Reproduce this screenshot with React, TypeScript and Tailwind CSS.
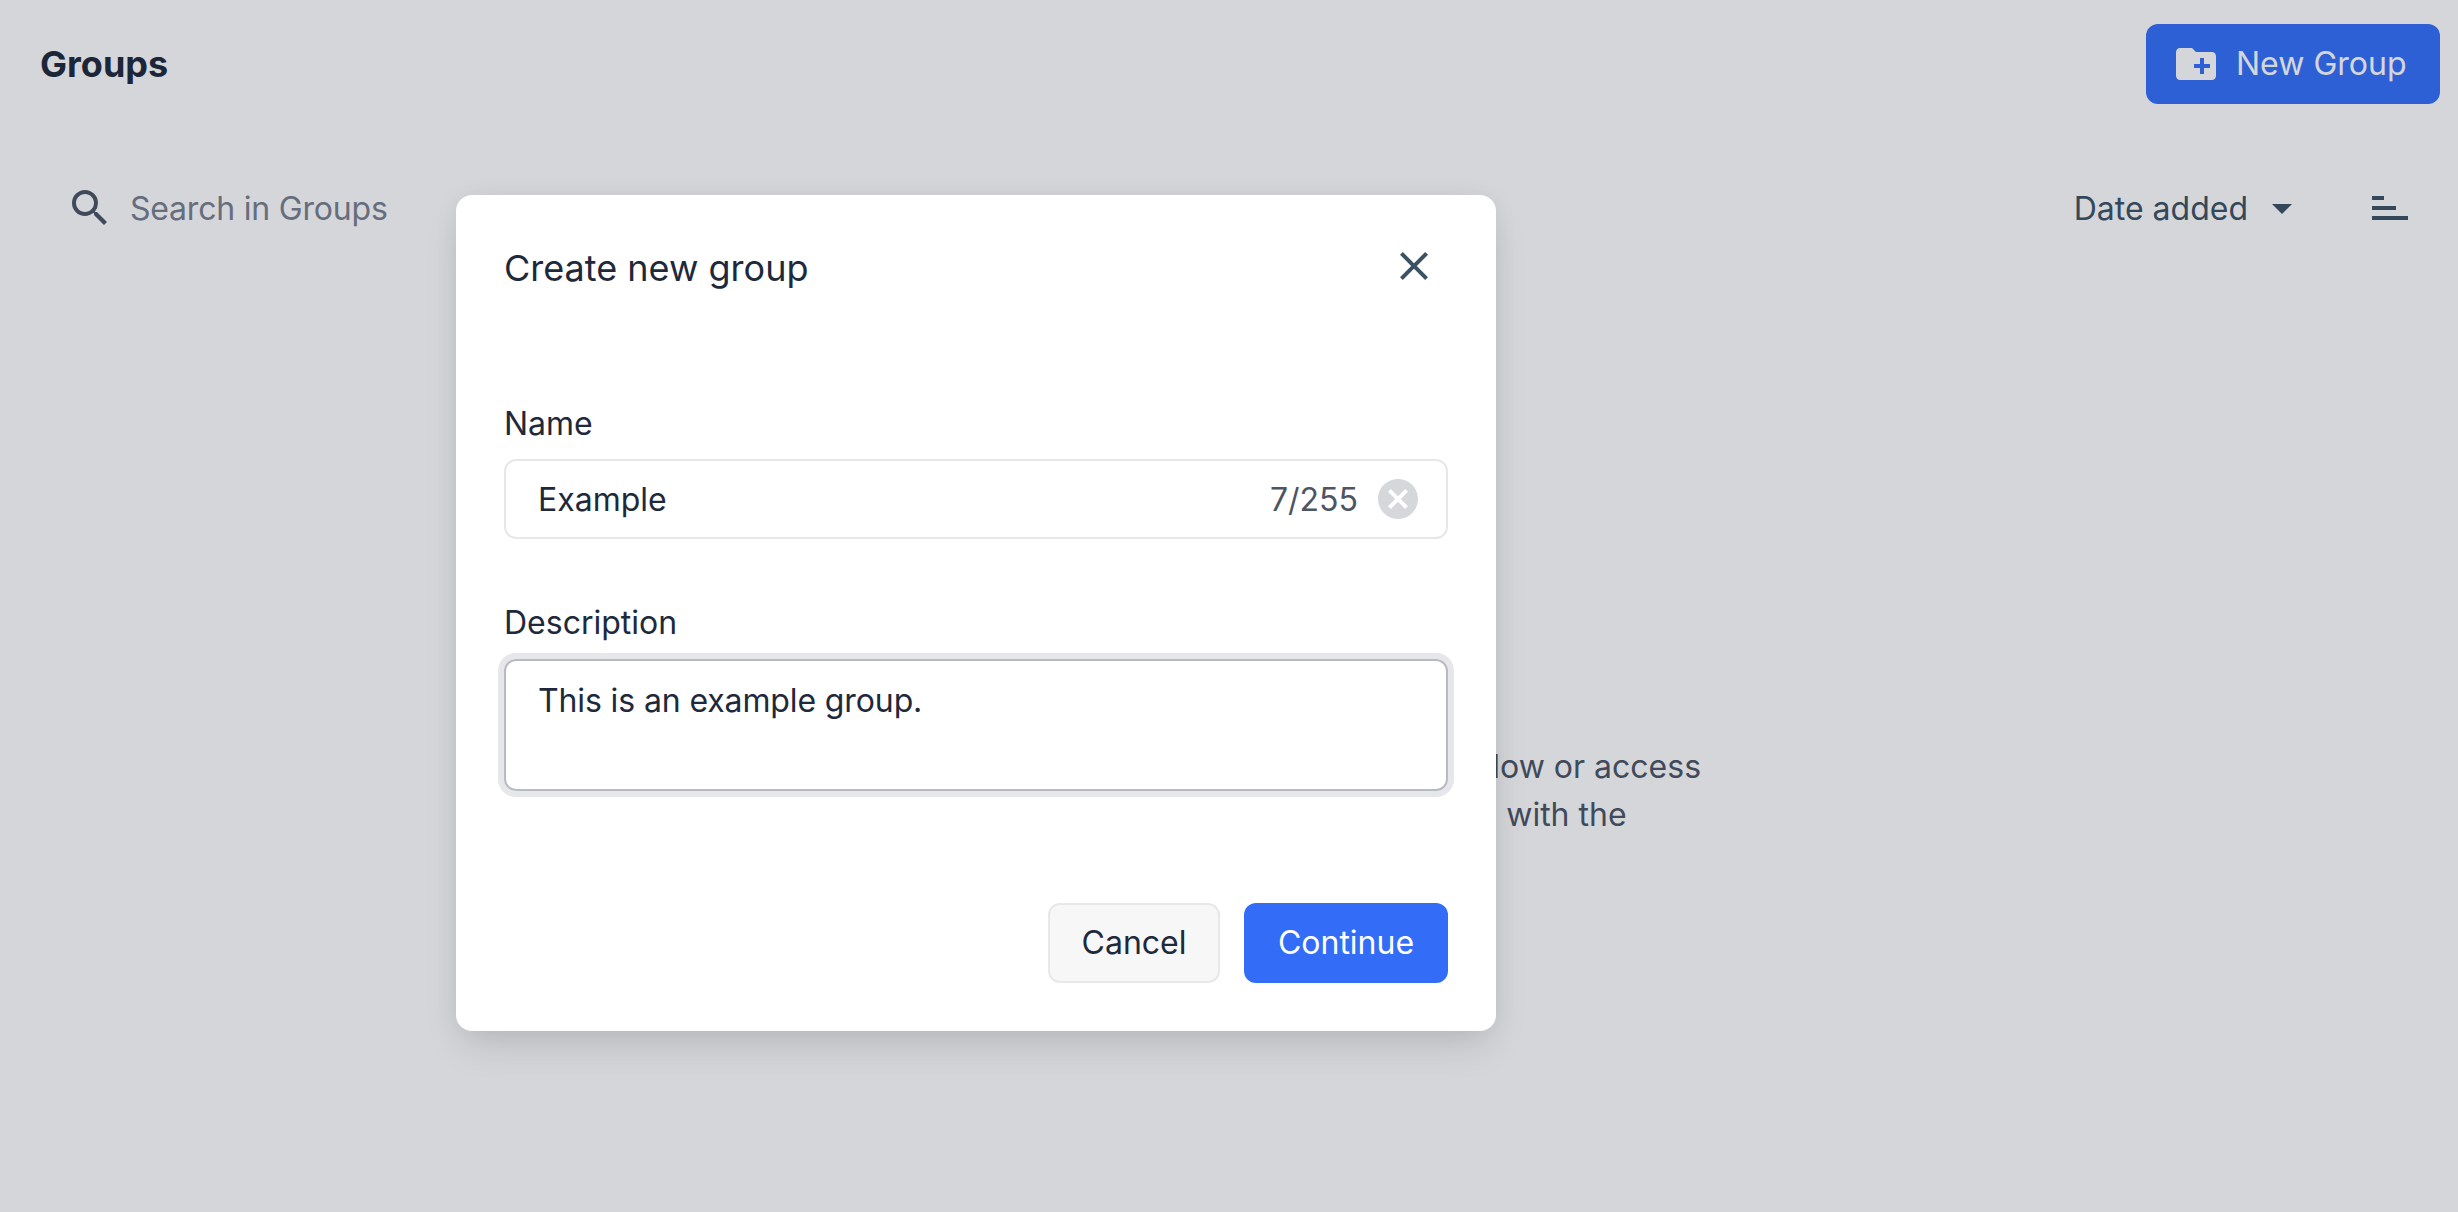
const inter = { fontFamily: 'Inter, sans-serif' }

function SearchIcon() {
  return (
    <svg viewBox="0 0 24 24" className="w-12 h-12 shrink-0 fill-[#4b5563]">
      <path d="M15.5 14h-.79l-.28-.27A6.471 6.471 0 0 0 16 9.5 6.5 6.5 0 1 0 9.5 16c1.61 0 3.09-.59 4.23-1.57l.27.28v.79l5 4.99L20.49 19l-4.99-5zm-6 0C7.01 14 5 11.99 5 9.5S7.01 5 9.5 5 14 7.01 14 9.5 11.99 14 9.5 14z" />
    </svg>
  )
}

function FolderPlusIcon() {
  return (
    <svg viewBox="0 0 24 24" className="w-12 h-12 shrink-0 fill-white">
      <path d="M20 6h-8l-2-2H4c-1.11 0-1.99.89-1.99 2L2 18c0 1.11.89 2 2 2h16c1.11 0 2-.89 2-2V8c0-1.11-.89-2-2-2zm-1 8h-3v3h-2v-3h-3v-2h3V9h2v3h3v2z" />
    </svg>
  )
}

function SortIcon() {
  return (
    <svg viewBox="0 0 36 24" className="w-9 h-6 shrink-0 fill-[#3a5263]">
      <rect x="0" y="0" width="12" height="4" />
      <rect x="0" y="10" width="24" height="4" />
      <rect x="0" y="20" width="36" height="4" />
    </svg>
  )
}

export default function App() {
  return (
    <div style={inter} className="relative h-screen w-full overflow-hidden bg-white">
      {/* Page behind the dialog */}
      <div className="flex items-center justify-between pl-10 pr-[18px] pt-6">
        <h1 className="text-[36px] leading-[48px] font-bold text-[#1e293b]">Groups</h1>
        <button className="flex items-center gap-4 h-20 w-[294px] pl-[26px] rounded-xl bg-[#3370f8] text-[32px] text-white">
          <FolderPlusIcon />
          New Group
        </button>
      </div>

      <div className="flex items-center justify-between mt-[79px] pl-[66px] pr-[50px]">
        <div className="flex items-center gap-4">
          <SearchIcon />
          <span className="pt-[2px] text-[32px] leading-[48px] tracking-[-0.2px] text-[#78808e]">Search in Groups</span>
        </div>
        <div className="flex items-center">
          <span className="pt-[2px] text-[32px] leading-[48px] text-[#3a5263]">Date added</span>
          <svg viewBox="0 0 24 24" className="w-12 h-12 ml-[10px] fill-[#3a5263]">
            <path d="M7 10l5 5 5-5z" />
          </svg>
          <div className="ml-[66px]">
            <SortIcon />
          </div>
        </div>
      </div>

      <div className="mt-[510px] text-center text-[32px] leading-[48px] text-[#4b5563]">
        <p className="pl-[6px]">When you create groups of people you might follow or access</p>
        <p className="pl-[91px]">them all here and keep all of it shared&nbsp; with the</p>
      </div>

      {/* Dim layer */}
      <div className="absolute inset-0 bg-[rgba(22,28,50,0.18)] pl-[456px] pt-[195px]">
        <div className="w-[1040px] h-[836px] rounded-2xl bg-white px-12 pt-[41px] shadow-[0_20px_40px_-8px_rgba(0,0,0,0.13),0_0_24px_rgba(0,0,0,0.05)]">
          <div className="flex items-center justify-between">
            <h2 className="text-[36px] leading-[64px] text-[#1e293b]">Create new group</h2>
            <button className="mr-[10px]">
              <svg viewBox="0 0 24 24" className="w-12 h-12 -mt-[5px] fill-[#3a5263]">
                <path d="M19 6.41L17.59 5 12 10.59 6.41 5 5 6.41 10.59 12 5 17.59 6.41 19 12 13.41 17.59 19 19 17.59 13.41 12z" />
              </svg>
            </button>
          </div>

          <label className="block mt-[100px] text-[32px] leading-[48px] text-[#1e293b]">Name</label>
          <div className="flex items-center mt-[11px] h-20 rounded-xl border-2 border-[#e5e7eb] pl-8 pr-6">
            <span className="flex-1 pt-[2px] text-[32px] text-[#1e293b]">Example</span>
            <span className="pt-[2px] text-[32px] text-[#4b5563]">7/255</span>
            <svg viewBox="0 0 24 24" className="w-12 h-12 ml-4 fill-[#d5d7db]">
              <path d="M12 2C6.47 2 2 6.47 2 12s4.47 10 10 10 10-4.47 10-10S17.53 2 12 2zm5 13.59L15.59 17 12 13.41 8.41 17 7 15.59 10.59 12 7 8.41 8.41 7 12 10.59 15.59 7 17 8.41 13.41 12 17 15.59z" />
            </svg>
          </div>

          <label className="block mt-[60px] text-[32px] leading-[48px] text-[#1e293b]">Description</label>
          <div className="mt-3 h-[132px] rounded-xl border-2 border-[#b8bac0] ring-[6px] ring-[#e5e7eb] pl-8 pt-4 text-[32px] leading-[48px] tracking-[-0.12px] text-[#1e293b]">
            This is an example group.
          </div>

          <div className="flex justify-end gap-6 mt-[112px]">
            <button className="h-20 w-[172px] rounded-xl border-2 border-[#e8e8e8] bg-[#f7f7f7] text-[32px] text-[#1e293b]">Cancel</button>
            <button className="h-20 w-[204px] rounded-xl bg-[#336df7] text-[32px] text-white">Continue</button>
          </div>
        </div>
      </div>
    </div>
  )
}
